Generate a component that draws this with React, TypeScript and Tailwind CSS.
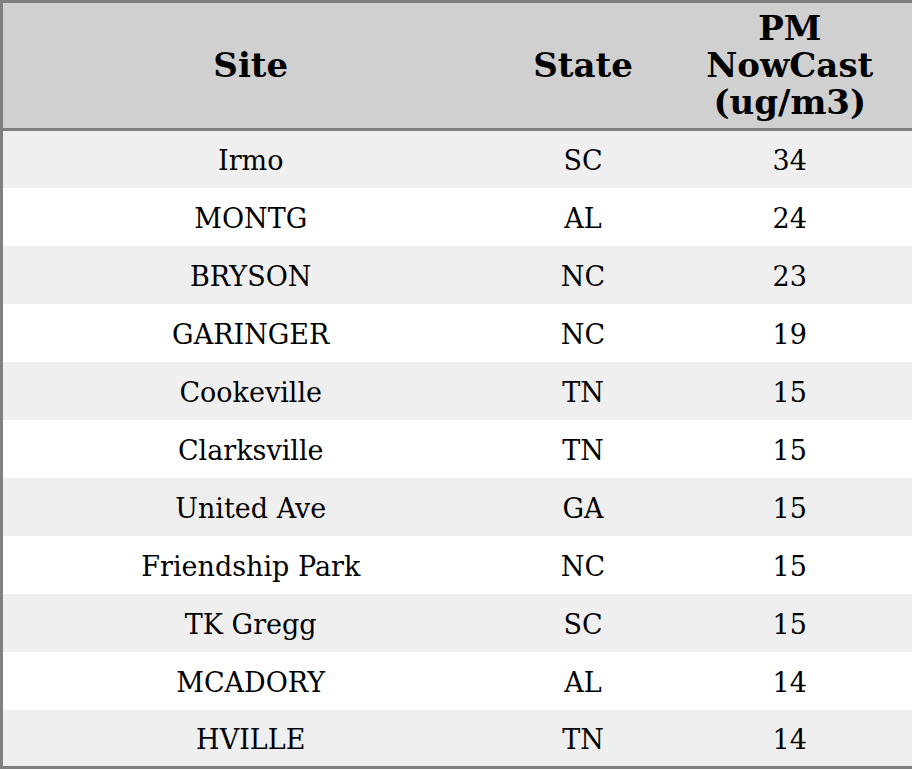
const rows: [string, string, number][] = [
  ["Irmo", "SC", 34],
  ["MONTG", "AL", 24],
  ["BRYSON", "NC", 23],
  ["GARINGER", "NC", 19],
  ["Cookeville", "TN", 15],
  ["Clarksville", "TN", 15],
  ["United Ave", "GA", 15],
  ["Friendship Park", "NC", 15],
  ["TK Gregg", "SC", 15],
  ["MCADORY", "AL", 14],
  ["HVILLE", "TN", 14],
];

export default function App() {
  return (
    <div className="w-[912px] h-[769px] bg-white font-['DejaVu_Serif',serif] text-black">
      <table className="w-[912px] border-collapse border-[3px] border-[#808080] table-fixed">
        <colgroup>
          <col className="w-[497px]" />
          <col className="w-[169px]" />
          <col className="w-[246px]" />
        </colgroup>
        <thead>
          <tr className="h-[128px] bg-[#d0d0d0] border-b-[3px] border-[#808080]">
            <th className="text-[34px] font-bold leading-[37px] text-center align-middle">Site</th>
            <th className="text-[34px] font-bold leading-[37px] text-center align-middle">State</th>
            <th className="text-[34px] font-bold leading-[37px] text-center align-middle">
              PM
              <br />
              NowCast
              <br />
              (ug/m3)
            </th>
          </tr>
        </thead>
        <tbody>
          {rows.map(([site, state, pm], i) => (
            <tr key={site} className={`h-[58px] ${i % 2 === 0 ? "bg-[#efefef]" : "bg-white"}`}>
              <td className="pt-[3px] text-[27px] leading-none text-center align-middle">{site}</td>
              <td className="pt-[3px] text-[27px] leading-none text-center align-middle">{state}</td>
              <td className="pt-[3px] text-[27px] leading-none text-center align-middle">{pm}</td>
            </tr>
          ))}
        </tbody>
      </table>
    </div>
  );
}
